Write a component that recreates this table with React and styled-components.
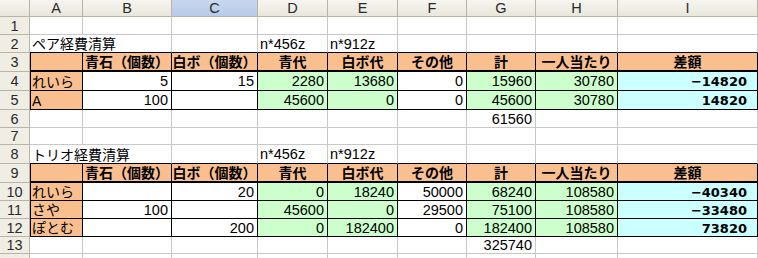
import React from 'react';
import styled, { createGlobalStyle } from 'styled-components';

const GlobalStyle = createGlobalStyle`
  body {
    margin: 0;
    background: #fff;
  }
`;

const GRID = '#c8c8c8';
const HEAD_LINE = '#b8b5a6';
const FILL = { o: '#f9bf8f', g: '#ccffcc', c: '#ccffff' };

const COLS = [30, 53, 89, 86, 70, 70, 69, 69, 82, 140];
const ROWS = [17, 18, 18, 19, 19, 19, 18, 17, 19, 19, 18, 18, 18, 17, 18];
const LETTERS = ['A', 'B', 'C', 'D', 'E', 'F', 'G', 'H', 'I'];

const Sheet = styled.div`
  display: grid;
  grid-template-columns: ${COLS.map((w) => w + 'px').join(' ')};
  grid-template-rows: ${ROWS.map((h) => h + 'px').join(' ')};
  width: 758px;
  height: 258px;
  overflow: hidden;
  font-family: "Liberation Sans", "Noto Sans CJK JP", sans-serif;
  font-size: 14px;
  color: #000;
`;

const Corner = styled.div`
  box-sizing: border-box;
  background: linear-gradient(#f6f5ef, #e9e7dc);
  border-right: 1px solid ${HEAD_LINE};
  border-bottom: 1px solid ${HEAD_LINE};
`;

const ColHead = styled.div`
  box-sizing: border-box;
  display: flex;
  align-items: center;
  justify-content: center;
  background: ${(p) => (p.$selected ? 'linear-gradient(#c9d8f0, #b7cae8)' : 'linear-gradient(#f6f5ef, #e9e7dc)')};
  border-right: 1px solid ${HEAD_LINE};
  border-bottom: 1px solid ${HEAD_LINE};
  color: #2a2a2a;
  font-size: 14.5px;
  line-height: 1;
  padding-top: 1px;
`;

const RowHead = styled.div`
  box-sizing: border-box;
  display: flex;
  align-items: center;
  justify-content: center;
  background: #efede4;
  border-right: 1px solid ${HEAD_LINE};
  border-bottom: 1px solid ${HEAD_LINE};
  color: #2a2a2a;
  font-size: 14.5px;
  line-height: 1;
  padding-top: 1px;
`;

const Cell = styled.div`
  box-sizing: border-box;
  display: flex;
  align-items: center;
  justify-content: ${(p) => (p.$align === 'right' ? 'flex-end' : p.$align === 'center' ? 'center' : 'flex-start')};
  padding: 1px ${(p) => (p.$align === 'center' ? 0 : p.$pr || 3)}px 0 ${(p) => (p.$align === 'center' ? 0 : 2)}px;
  grid-column: ${(p) => (p.$span ? `span ${p.$span}` : 'auto')};
  background: ${(p) => p.$fill || 'transparent'};
  border-right: 1px solid ${(p) => (p.$boxed ? '#000' : GRID)};
  border-bottom: ${(p) => (p.$thick ? 2 : 1)}px solid ${(p) => (p.$boxed || p.$under ? '#000' : GRID)};
  box-shadow: ${(p) => (p.$edge ? 'inset 1px 0 0 #000' : 'none')};
  font-weight: ${(p) => (p.$bold ? 700 : 400)};
  white-space: nowrap;
  line-height: 1;
`;

const Num = styled.span`
  font-size: 14.5px;
`;

const BoldNum = styled.span`
  font-family: "DejaVu Sans", sans-serif;
  font-weight: 700;
  font-size: 13px;
`;

const HEAD = ['', '青石（個数）', '白ボ（個数）', '青代', '白ボ代', 'その他', '計', '一人当たり', '差額'];
const BODY_FILL = [FILL.o, null, null, FILL.g, FILL.g, null, FILL.g, FILL.g, FILL.c];

const pair = [
  ['れいら', '5', '15', '2280', '13680', '0', '15960', '30780', '−14820'],
  ['A', '100', '', '45600', '0', '0', '45600', '30780', '14820'],
];

const trio = [
  ['れいら', '', '20', '0', '18240', '50000', '68240', '108580', '−40340'],
  ['さや', '100', '', '45600', '0', '29500', '75100', '108580', '−33480'],
  ['ぽとむ', '', '200', '0', '182400', '0', '182400', '108580', '73820'],
];

const TitleRow = ({ n, title }) => (
  <>
    <RowHead>{n}</RowHead>
    <Cell $span={2} $under>{title}</Cell>
    <Cell $under />
    <Cell $under><Num>n*456z</Num></Cell>
    <Cell $under><Num>n*912z</Num></Cell>
    <Cell $under />
    <Cell $under />
    <Cell $under />
    <Cell $under />
  </>
);

const HeadRow = ({ n }) => (
  <>
    <RowHead>{n}</RowHead>
    {HEAD.map((h, i) => (
      <Cell key={i} $boxed $thick $edge={i === 0} $fill={FILL.o} $align="center" $bold>
        {h}
      </Cell>
    ))}
  </>
);

const DataRow = ({ n, values }) => (
  <>
    <RowHead>{n}</RowHead>
    {values.map((v, i) => (
      <Cell
        key={i}
        $boxed
        $edge={i === 0}
        $fill={BODY_FILL[i]}
        $align={i === 0 ? 'left' : 'right'}
        $pr={i === 8 ? 10 : 3}
      >
        {i === 0 ? v : i === 8 ? <BoldNum>{v}</BoldNum> : <Num>{v}</Num>}
      </Cell>
    ))}
  </>
);

const EmptyRow = ({ n, total }) => (
  <>
    <RowHead>{n}</RowHead>
    {LETTERS.map((l) => (
      <Cell key={l} $align="right">
        {l === 'G' && total ? <Num>{total}</Num> : null}
      </Cell>
    ))}
  </>
);

export default function App() {
  return (
    <>
      <GlobalStyle />
      <Sheet>
        <Corner />
        {LETTERS.map((l) => (
          <ColHead key={l} $selected={l === 'C'}>
            {l}
          </ColHead>
        ))}
        <EmptyRow n={1} />
        <TitleRow n={2} title="ペア経費清算" />
        <HeadRow n={3} />
        {pair.map((r, i) => (
          <DataRow key={i} n={4 + i} values={r} />
        ))}
        <EmptyRow n={6} total="61560" />
        <EmptyRow n={7} />
        <TitleRow n={8} title="トリオ経費清算" />
        <HeadRow n={9} />
        {trio.map((r, i) => (
          <DataRow key={i} n={10 + i} values={r} />
        ))}
        <EmptyRow n={13} total="325740" />
        {/* row 14 is only a sliver at the bottom edge */}
        <EmptyRow n="" />
      </Sheet>
    </>
  );
}
